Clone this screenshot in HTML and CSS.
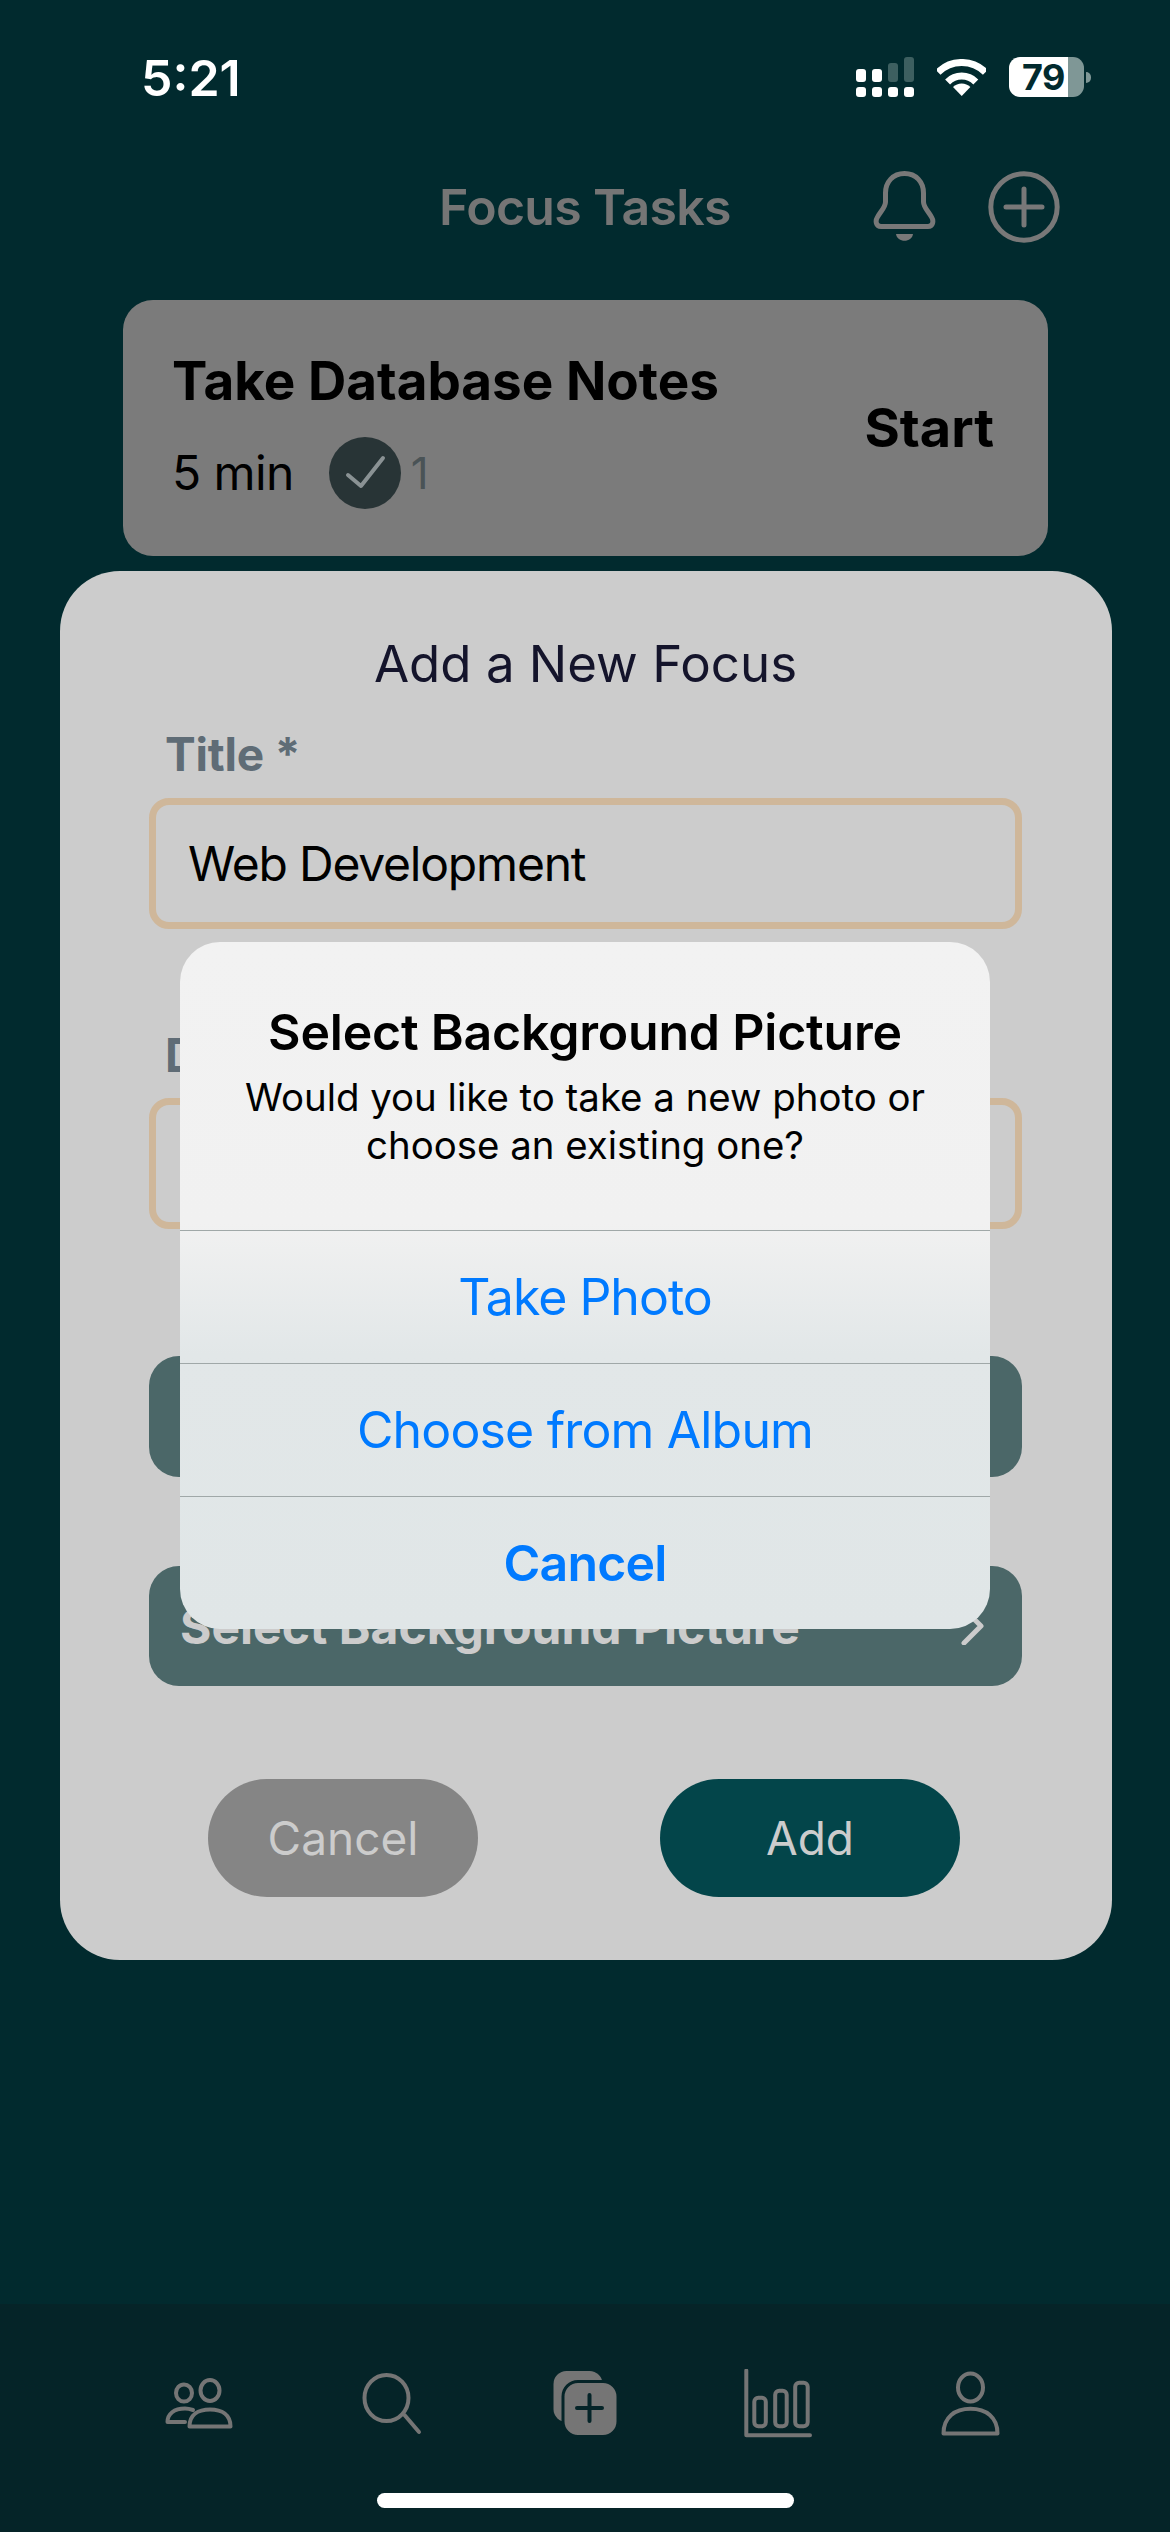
FILE: index.html
```html
<!DOCTYPE html>
<html lang="en">
<head>
<meta charset="utf-8">
<title>Focus Tasks</title>
<link rel="stylesheet" href="styles.css">
</head>
<body>
<div class="screen">
  <div class="status">
    <span class="time">5:21</span>
    <div class="status-icons">
      <svg class="signal" width="58" height="40" viewBox="0 0 58 40">
        <rect class="on" x="0" y="12" width="10" height="13" rx="3"/><rect class="on" x="16" y="12" width="10" height="13" rx="3"/>
        <rect class="dim" x="32" y="6" width="10" height="19" rx="3"/><rect class="dim" x="48" y="0" width="10" height="25" rx="3"/>
        <rect class="on" x="0" y="30" width="10" height="10" rx="3"/><rect class="on" x="16" y="30" width="10" height="10" rx="3"/>
        <rect class="on" x="32" y="30" width="10" height="10" rx="3"/><rect class="on" x="48" y="30" width="10" height="10" rx="3"/>
      </svg>
      <svg class="wifi" width="49" height="37" viewBox="0 0 49 37">
        <path class="wifi-arc" d="M1 13.3A33.5 33.5 0 0 1 48.4 13.3"/>
        <path class="wifi-arc" d="M10.6 22.9A20 20 0 0 1 38.8 22.9"/>
        <path class="on" d="M24.7 37L16 28A12.5 12.5 0 0 1 33.4 28Z"/>
      </svg>
      <div class="battery"><span class="battery-level">79</span></div>
    </div>
  </div>

  <header class="header">
    <span></span>
    <h1 class="header-title">Focus Tasks</h1>
    <div class="header-actions">
      <svg width="64" height="72" viewBox="0 0 64 72">
        <path class="line-head" d="M31.5 2.5C20 2.5 12.5 11 12.5 22V31C12.5 36 8 40 4.5 46C2 50 3 55.5 8 55.5H55C60 55.5 61 50 58.5 46C55 40 50.5 36 50.5 31V22C50.5 11 43 2.5 31.5 2.5Z"/>
        <path class="fill-head" d="M23 63H40C39 72 24 72 23 63Z"/>
      </svg>
      <svg width="72" height="72" viewBox="0 0 72 72">
        <circle class="line-head" cx="36" cy="36" r="33.2"/>
        <path class="line-head" d="M18 36H54M36 18V54"/>
      </svg>
    </div>
  </header>

  <section class="card">
    <div class="card-info">
      <div class="card-title">Take Database Notes</div>
      <div class="card-meta">
        <span class="card-time">5 min</span>
        <span class="check">
          <svg width="72" height="72" viewBox="0 0 72 72"><path class="check-mark" d="M19 38L32 49L54 21"/></svg>
        </span>
        <span class="count">1</span>
      </div>
    </div>
    <div class="card-start">Start</div>
  </section>

  <section class="modal">
    <h2 class="modal-title">Add a New Focus</h2>
    <label class="label label-first">Title *</label>
    <div class="input">Web Development</div>
    <label class="label label-second">D</label>
    <div class="input input-second"></div>
    <div class="select select-first"></div>
    <div class="select select-second">
      <span>Select Background Picture</span>
      <svg width="24" height="38" viewBox="0 0 24 38"><path class="chevron" d="M3 2L20 19L3 36"/></svg>
    </div>
    <div class="modal-actions">
      <div class="pill pill-cancel">Cancel</div>
      <div class="pill pill-add">Add</div>
    </div>
  </section>

  <nav class="tabbar">
    <div class="tabs">
      <div class="tab">
        <svg width="70" height="70" viewBox="0 0 70 70">
          <ellipse class="line-tab" cx="46" cy="21.5" rx="9.5" ry="10.5"/>
          <ellipse class="line-tab" cx="20" cy="24" rx="8" ry="8.5"/>
          <path class="line-tab" d="M25.5 57.5C25.5 46 34 40.5 46 40.5S66.5 46 66.5 57.5Z"/>
          <path class="line-tab" d="M29 41C26 40 24 39.5 21 39.5C10 39.5 3.5 45 3.5 53H21"/>
        </svg>
      </div>
      <div class="tab">
        <svg width="70" height="70" viewBox="0 0 70 70">
          <ellipse class="line-tab" cx="29.5" cy="29" rx="22" ry="23"/>
          <path class="line-tab" d="M47.5 46L62 63"/>
        </svg>
      </div>
      <div class="tab">
        <svg width="70" height="70" viewBox="0 0 70 70">
          <rect class="fill-tab" x="3.5" y="2" width="49" height="51" rx="13"/>
          <rect class="fill-tab cut" x="13" y="12.5" width="55" height="55" rx="15"/>
          <path class="plus-cut" d="M27 39H52M39.5 26V52"/>
        </svg>
      </div>
      <div class="tab">
        <svg width="70" height="70" viewBox="0 0 70 70">
          <path class="line-tab" d="M3.3 1.5V66.2H67"/>
          <rect class="line-tab" x="11.3" y="28.7" width="11.5" height="28.6" rx="4"/>
          <rect class="line-tab" x="32.2" y="21.7" width="11.5" height="35.6" rx="4"/>
          <rect class="line-tab" x="52.2" y="13.7" width="12.5" height="43.6" rx="4"/>
        </svg>
      </div>
      <div class="tab">
        <svg width="70" height="70" viewBox="0 0 70 70">
          <ellipse class="line-tab" cx="34.5" cy="18.5" rx="12.5" ry="14"/>
          <path class="line-tab" d="M7.5 64.5C7.5 48 19 39.7 34.5 39.7S61.5 48 61.5 64.5Z"/>
        </svg>
      </div>
    </div>
    <div class="home-bar"></div>
  </nav>

  <div class="alert">
    <div class="alert-head">
      <div class="alert-title">Select Background Picture</div>
      <div class="alert-message">Would you like to take a new photo or<br>choose an existing one?</div>
    </div>
    <div class="alert-btn">Take Photo</div>
    <div class="alert-btn alert-btn-album">Choose from Album</div>
    <div class="alert-btn alert-btn-strong">Cancel</div>
  </div>
</div>
</body>
</html>
```
FILE: styles.css
```css
* { box-sizing: border-box; }
html, body { margin: 0; padding: 0; }
body { background: #012a2e; font-family: Inter, "Noto Sans", sans-serif; }

.screen {
  position: relative;
  width: 1170px;
  height: 2532px;
  overflow: hidden;
  display: flex;
  flex-direction: column;
  background: #012a2e;
}

/* status bar */
.status {
  height: 160px;
  flex: none;
  display: flex;
  justify-content: space-between;
  align-items: flex-start;
  padding: 48px 79px 0 141px;
}
.time { font-size: 50px; font-weight: 600; line-height: 60px; color: #fff; }
.status-icons { display: flex; align-items: center; gap: 23px; margin-top: 9px; }
.signal, .wifi { display: block; }
.on { fill: #fff; }
.dim { fill: #3d5f60; }
.wifi-arc { fill: none; stroke: #fff; stroke-width: 7; }
.battery {
  position: relative;
  width: 75px;
  height: 40px;
  margin-right: 7px;
  border-radius: 11px;
  background: linear-gradient(90deg, #fff 0, #fff 78.5%, #7f9796 78.5%, #7f9796 100%);
  display: flex;
  align-items: center;
  padding-left: 13px;
}
.battery::after {
  content: "";
  position: absolute;
  right: -7px;
  top: 15px;
  width: 5px;
  height: 11px;
  border-radius: 0 5px 5px 0;
  background: #7f9796;
}
.battery-level { font-size: 36px; font-weight: 700; line-height: 40px; letter-spacing: -0.5px; color: #012a2e; }

/* header */
.header {
  height: 94px;
  flex: none;
  display: grid;
  grid-template-columns: 1fr auto 1fr;
  align-items: center;
}
.header-title { margin: 0; font-size: 50px; font-weight: 600; line-height: 60px; letter-spacing: -0.7px; color: #757575; }
.header-actions { display: flex; justify-content: flex-end; align-items: center; gap: 51px; padding-right: 110px; }
.header-actions svg { display: block; }
.line-head { fill: none; stroke: #787878; stroke-width: 5; stroke-linecap: round; stroke-linejoin: round; }
.fill-head { fill: #787878; }

/* task card */
.card {
  flex: none;
  height: 256px;
  margin: 46px 122px 0 123px;
  padding: 0 54px 0 49px;
  border-radius: 30px;
  background: #7b7b7b;
  display: flex;
  justify-content: space-between;
  align-items: center;
}
.card-info { display: flex; flex-direction: column; gap: 26px; padding-top: 4px; }
.card-title { font-size: 53px; font-weight: 700; line-height: 60px; color: #000; }
.card-meta { display: flex; align-items: center; height: 72px; }
.card-time { font-size: 48px; line-height: 60px; letter-spacing: -0.6px; color: #000; }
.check { width: 72px; height: 72px; margin: 0 10px 0 35px; border-radius: 50%; background: #283436; }
.check svg { display: block; }
.check-mark { fill: none; stroke: #8a9294; stroke-width: 4; stroke-linecap: round; stroke-linejoin: round; }
.count { font-size: 44px; line-height: 60px; color: #4a5356; }
.card-start { font-size: 54px; font-weight: 700; line-height: 60px; color: #000; }

/* modal */
.modal {
  flex: none;
  height: 1389px;
  margin: 15px 58px 0 60px;
  padding: 63px 90px 0 89px;
  border-radius: 60px;
  background: #cccccc;
  display: flex;
  flex-direction: column;
}
.modal-title { margin: 0; font-size: 51px; font-weight: 400; line-height: 60px; text-align: center; color: #14142b; }
.label { display: block; padding-left: 16px; font-size: 46px; font-weight: 700; line-height: 56px; letter-spacing: -0.2px; color: #5f6c76; }
.label-first { margin-top: 32px; }
.label-second { margin-top: 98px; }
.input {
  height: 131px;
  margin-top: 16px;
  padding-left: 32px;
  border: 7px solid #cfb79a;
  border-radius: 20px;
  display: flex;
  align-items: center;
  font-size: 48px;
  letter-spacing: -1.2px;
  color: #000;
}
.input-second { margin-top: 15px; }
.select {
  height: 121px;
  padding: 0 37px 0 31px;
  border-radius: 30px;
  background: #4b6768;
  display: flex;
  justify-content: space-between;
  align-items: center;
  font-size: 48px;
  font-weight: 700;
  color: #cccccc;
}
.select svg { display: block; }
.select-first { margin-top: 127px; }
.select-second { margin-top: 89px; height: 120px; }
.chevron { fill: none; stroke: #cccccc; stroke-width: 5; stroke-linecap: round; stroke-linejoin: round; }
.modal-actions { display: flex; gap: 182px; margin-top: 93px; padding-left: 59px; }
.pill {
  height: 118px;
  border-radius: 59px;
  display: flex;
  justify-content: center;
  align-items: center;
  font-size: 46px;
  color: #cccccc;
}
.pill-cancel { width: 270px; background: #858585; }
.pill-add { width: 300px; background: #03454a; }

/* tab bar */
.tabbar {
  flex: none;
  margin-top: auto;
  height: 228px;
  padding-top: 65px;
  background: #052428;
  display: flex;
  flex-direction: column;
  align-items: center;
}
.tabs { display: grid; grid-template-columns: repeat(5, 193px); }
.tab { height: 70px; display: flex; justify-content: center; }
.tab svg { display: block; }
.line-tab { fill: none; stroke: #757575; stroke-width: 4; stroke-linecap: round; stroke-linejoin: round; }
.fill-tab { fill: #757575; }
.fill-tab.cut { stroke: #052428; stroke-width: 3; }
.plus-cut { fill: none; stroke: #052428; stroke-width: 4; stroke-linecap: round; }
.home-bar { width: 417px; height: 15px; margin-top: 54px; border-radius: 8px; background: #fff; }

/* alert (overlay) */
.alert {
  position: absolute;
  left: 180px;
  top: 942px;
  width: 810px;
  height: 687px;
  border-radius: 40px;
  overflow: hidden;
  background: linear-gradient(180deg, #f2f2f2 0, #f1f1f1 41%, #e2e7e8 60%, #e0e6e7 100%);
  display: flex;
  flex-direction: column;
}
.alert-head { height: 288px; padding-top: 60px; text-align: center; color: #000; }
.alert-title { font-size: 50px; font-weight: 600; line-height: 60px; letter-spacing: -0.2px; }
.alert-message { margin-top: 11px; font-size: 38.4px; line-height: 48px; }
.alert-btn {
  height: 133px;
  border-top: 1.5px solid #a0a8a8;
  display: flex;
  justify-content: center;
  align-items: center;
  font-size: 50px;
  letter-spacing: -1px;
  color: #007aff;
}
.alert-btn-album { letter-spacing: -0.85px; }
.alert-btn-strong { font-weight: 600; letter-spacing: -0.8px; }
```
